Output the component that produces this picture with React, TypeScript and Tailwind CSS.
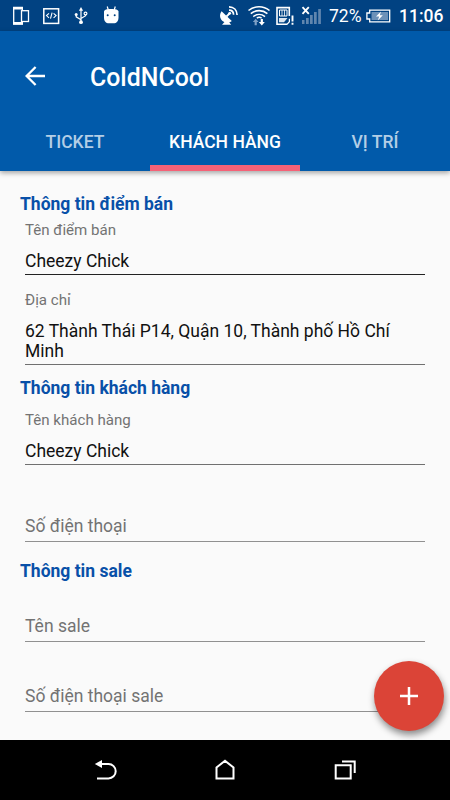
import React from "react";

function StatusBar() {
  return (
    <div className="flex h-[31px] items-center bg-[#014282] text-white">
      <svg className="ml-[12px] shrink-0" width="18" height="31" viewBox="12 0 18 31" fill="none" stroke="#fff">
        <path d="M22.300 10V7.500H13.700V24h8.600v-2" strokeWidth="1.300" />
        <path d="M13 8.200h10M13 23.300h10" strokeWidth="2.400" />
        <rect x="21.500" y="10.700" width="7" height="10.800" strokeWidth="1.300" />
      </svg>
      <svg className="ml-[13px] shrink-0" width="17" height="31" viewBox="43 0 17 31" fill="none" stroke="#fff">
        <rect x="43.800" y="8.800" width="14.800" height="14.600" strokeWidth="1.500" />
        <path d="M49 13.300l-2.500 2.300 2.500 2.300M53.600 13.300l2.500 2.300-2.500 2.300M52.100 12.700l-1.600 6" strokeWidth="1.100" />
      </svg>
      <svg className="ml-[14px] shrink-0" width="14" height="31" viewBox="74 0 14 31" fill="none" stroke="#fff" strokeWidth="1.200">
        <path d="M81 9.500V22M76.200 15.200v1.600L81 19.800M85.600 14.500v1.200L81 18.500" />
        <path d="M78.900 10.700L81 7l2.100 3.700z" fill="#fff" stroke="none" />
        <circle cx="81" cy="22.200" r="1.900" fill="#fff" stroke="none" />
        <circle cx="76.200" cy="14.500" r="1.500" fill="#fff" stroke="none" />
        <circle cx="85.500" cy="13.600" r="1.400" />
      </svg>
      <svg className="ml-[15px] shrink-0" width="16" height="31" viewBox="103 0 16 31">
        <path d="M107.200 6.500l1.300 4M115.300 6.500l-1.300 4" stroke="#fff" strokeWidth="1.200" />
        <path d="M104 11.500c0-1.700 3-2.500 7.200-2.500s7.300.8 7.300 2.500v6c0 3.800-2 5.800-5 5.800h-4.600c-3 0-4.900-2-4.900-5.800z" fill="#fff" />
        <circle cx="107.700" cy="15.300" r="1" fill="#014282" />
        <circle cx="114.700" cy="15.300" r="1" fill="#014282" />
      </svg>
      <svg className="ml-auto shrink-0" width="22" height="31" viewBox="219 0 22 31" fill="none" stroke="#fff">
        <path d="M221.600 11.300c-2.300 3-2 7 .6 9.400 2.700 2.400 6.800 2.600 9.600.4z" fill="#fff" stroke="none" />
        <path d="M224.500 22h4.500l2.200 2.700h-9.200z" fill="#fff" stroke="none" />
        <path d="M226.500 16.500l3-3" strokeWidth="1.800" />
        <circle cx="229.700" cy="13.300" r="1.400" fill="#fff" stroke="none" />
        <path d="M229 10.200c2.700 0 4.500 1.800 4.600 4.600M229 6.900c4.800 0 8 3.300 8.100 8.200" strokeWidth="1.700" />
      </svg>
      <svg className="ml-[7px] shrink-0" width="23" height="31" viewBox="248 0 23 31" fill="none" stroke="#fff">
        <path d="M248.500 10.500c6-5 15-5 21 0M250.800 13.600c5-4 11.800-4 16.600 0M253.300 16.600c3.500-2.800 8.200-2.800 11.700 0" strokeWidth="1.600" />
        <path d="M256.800 18.200c1.600-1.100 3.300-1.100 4.800 0" strokeWidth="1.500" />
        <path d="M252.800 22l2.900-3.300 2.900 3.300h-1.800v3.300h-2.200v-3.300z" fill="#7ea0c6" stroke="none" />
        <path d="M258.800 22l3 3.500 3-3.500h-1.900v-3h-2.200v3z" fill="#fff" stroke="none" />
      </svg>
      <svg className="ml-[5px] shrink-0" width="18" height="31" viewBox="276 0 18 31" fill="none" stroke="#fff">
        <path d="M289.300 16V7.600h-12.300v16.600h10.500" strokeWidth="1.600" />
        <path d="M279.500 10h7.500v6h-7.500z" strokeWidth="1" />
        <path d="M282 10v6M284.500 10v6" strokeWidth="0.800" />
        <path d="M279 18h8.500l-3.500 4.200h-5z" fill="#dce6f0" stroke="none" />
        <path d="M287.200 24.200l2.200-2.500v-3" strokeWidth="1.200" />
        <path d="M292.500 15.500v6M292.500 22.800v2" strokeWidth="1.900" />
      </svg>
      <svg className="ml-[7px] shrink-0" width="21" height="31" viewBox="301 0 21 31">
        <path d="M302.500 7.200l6.300 6.600M308.800 7.200l-6.300 6.600" stroke="#fff" strokeWidth="1.900" />
        <path d="M302 20h2.500v4H302zM306 18h2.700v6H306zM310 15h2.700v9H310zM314 12h2.700v12H314zM318.200 9h2.700v15h-2.700z" fill="#6086ae" />
      </svg>
      <span className="ml-[7px] w-[34px] whitespace-nowrap pt-[2px] text-[17.500px] leading-[31px]">72%</span>
      <svg className="ml-[3px] shrink-0" width="25" height="31" viewBox="366 0 25 31">
        <path d="M369.700 10.200h20v11.600h-20v-2.800h-2.800v-6h2.800z" fill="none" stroke="#fff" strokeWidth="1.300" />
        <path d="M371.500 12h16.600v8h-16.600z" fill="#6c91b8" />
        <path d="M381 11.500l-5 5h3.200l-1.400 4 5-5.200h-3z" fill="#fff" />
      </svg>
      <span className="ml-[8px] w-[51px] whitespace-nowrap pt-[2px] text-[17.500px] font-medium leading-[31px]">11:06</span>
    </div>
  );
}

function Header() {
  return (
    <header className="relative z-10 h-[140px] bg-[#015aaa] text-white shadow-[0_2px_5px_rgba(0,0,0,0.35)]">
      <div className="flex h-[92px] items-center pl-[25px]">
        <svg className="-mt-[2px]" width="20" height="20" viewBox="0 0 20 20" fill="none" stroke="#fff" strokeWidth="2.300">
          <path d="M20 10H2M10.600 1L1.600 10l9 9" />
        </svg>
        <h1 className="ml-[45px] pt-[1px] text-[24.900px] font-medium leading-[30px]">ColdNCool</h1>
      </div>
      <nav className="grid h-[48px] grid-cols-3 text-center text-[17.500px] font-medium leading-[38px]">
        <span className="text-[#b3cee6]">TICKET</span>
        <span className="border-b-6 border-[#f56277]">KHÁCH HÀNG</span>
        <span className="text-[#b3cee6]">VỊ TRÍ</span>
      </nav>
    </header>
  );
}

function Section({ title, className }: { title: string; className: string }) {
  return <h2 className={`pl-[20px] text-[17.500px] font-bold leading-[20px] text-[#0850a8] ${className}`}>{title}</h2>;
}

function Field({ label, value, className, line = "border-[#909090]" }: { label: string; value?: string; className: string; line?: string }) {
  return (
    <div className={`mx-[25px] flex flex-col border-b ${line} ${className}`}>
      {value ? (
        <>
          <span className="mb-[12px] text-[15.100px] leading-[18px] text-[#737373]">{label}</span>
          <span className="text-[17.500px] leading-[20px] text-[#111]">{value}</span>
        </>
      ) : (
        <span className="text-[17.500px] leading-[20px] text-[#737373]">{label}</span>
      )}
    </div>
  );
}

function NavBar() {
  return (
    <footer className="flex h-[60px] items-center justify-center bg-black">
      <svg width="24" height="24" viewBox="94 758 24 24" fill="none" stroke="#fff" strokeWidth="2">
        <path d="M98 764h10.500a7.200 7.200 0 0 1 0 14.400H97" />
        <path d="M94.800 764l7.200-4v8z" fill="#fff" stroke="none" />
      </svg>
      <svg className="ml-[95px]" width="24" height="24" viewBox="213 758 24 24" fill="none" stroke="#fff" strokeWidth="2">
        <path d="M216.500 767.500v11h17v-11l-8.500-6.700z" />
      </svg>
      <svg className="ml-[96px]" width="24" height="24" viewBox="333 758 24 24" fill="none" stroke="#fff">
        <path d="M335.700 765.200h15v13.200h-15z" strokeWidth="2" />
        <path d="M342 761.500h12.700V773" strokeWidth="2" />
      </svg>
    </footer>
  );
}

export default function App() {
  return (
    <div className="relative flex h-[800px] w-[450px] flex-col overflow-hidden bg-[#fafafa] font-['Roboto',sans-serif]">
      <StatusBar />
      <Header />
      <main className="h-[569px]">
        <Section title="Thông tin điểm bán" className="pt-[23px]" />
        <Field label="Tên điểm bán" value="Cheezy Chick" className="mt-[7px] h-[54px]" line="border-[#222]" />
        <Field label="Địa chỉ" value="62 Thành Thái P14, Quận 10, Thành phố Hồ Chí Minh" className="mt-[16px] h-[74px]" line="border-[#707070]" />
        <Section title="Thông tin khách hàng" className="pt-[13px]" />
        <Field label="Tên khách hàng" value="Cheezy Chick" className="mt-[13px] h-[54px]" line="border-[#707070]" />
        <Field label="Số điện thoại" className="mt-[51px] h-[26px]" />
        <Section title="Thông tin sale" className="pt-[19px]" />
        <Field label="Tên sale" className="mt-[35px] h-[26px]" />
        <Field label="Số điện thoại sale" className="mt-[44px] h-[26px]" />
      </main>
      <button className="absolute left-[374px] top-[661px] z-10 flex size-[70px] items-center justify-center rounded-full bg-[#db4437] shadow-[1px_4px_7px_rgba(0,0,0,0.45)]" aria-label="+">
        <svg width="18" height="18" viewBox="0 0 18 18" stroke="#fff" strokeWidth="2.500">
          <path d="M0 9h18M9 0v18" />
        </svg>
      </button>
      <NavBar />
    </div>
  );
}
